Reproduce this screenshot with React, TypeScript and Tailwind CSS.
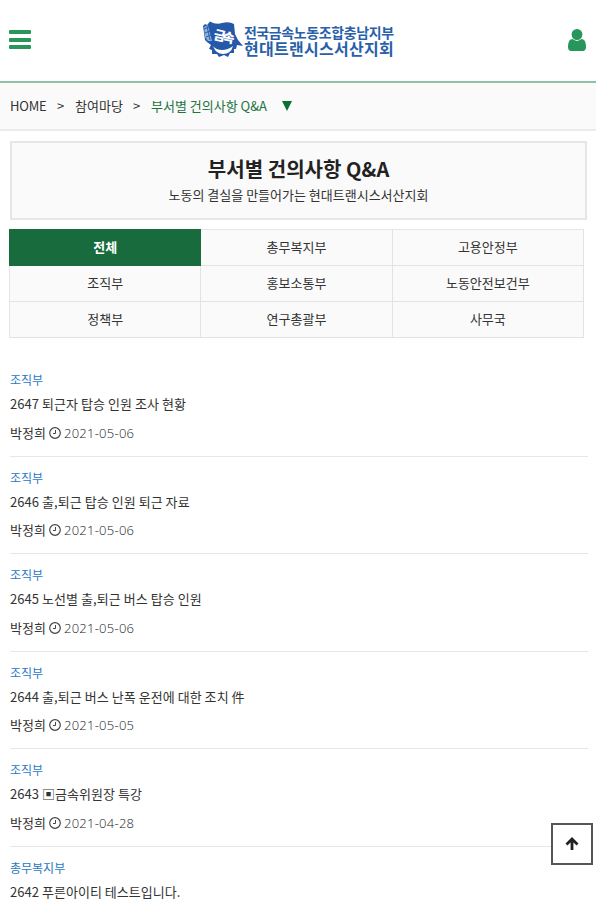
import React from "react";

const posts = [
  { dept: "조직부", title: "2647 퇴근자 탑승 인원 조사 현황", date: "2021-05-06" },
  { dept: "조직부", title: "2646 출,퇴근 탑승 인원 퇴근 자료", date: "2021-05-06" },
  { dept: "조직부", title: "2645 노선별 출,퇴근 버스 탑승 인원", date: "2021-05-06" },
  { dept: "조직부", title: "2644 출,퇴근 버스 난폭 운전에 대한 조치 件", date: "2021-05-05" },
  { dept: "조직부", title: "2643 ▣금속위원장 특강", date: "2021-04-28" },
];

const tabs = ["전체", "총무복지부", "고용안정부", "조직부", "홍보소통부", "노동안전보건부", "정책부", "연구총괄부", "사무국"];

function Flag() {
  return (
    <svg viewBox="0 0 42 38" className="h-[38px] w-[42px] shrink-0">
      <path d="M1 6 L3 4 L5 5 L8 1.500 Q14 5 20 3 Q27 1 32 4 L33 14 L36 20 L41 26 L35 25 L34 29 L32 29 L32 33 L28 33 L26 37 L22 35 L17 37 L15 34 L10 34 L10 30 L7 29 L9 25 L5 22 L3 20 L2 13 Z" fill="#2458a8" />
      <path d="M2 7 L6 5 L10 21 L6 21 L3 17 Z" fill="#8fafd8" />
      <path d="M2 9 L7 7 M3 13 L8 11 M4 17 L9 15 M5 6 L8 20" stroke="#2a5faa" strokeWidth="1" />
      <path d="M11 26 Q14 30 20 30 Q26 30 31 26 Q29 34 21 34 Q14 34 11 26Z" fill="#fff" />
      <text x="11" y="19" fontSize="13" fontWeight="900" fill="#fff" fontFamily="Noto Sans CJK KR, sans-serif" transform="rotate(12 11 19)" textLength="21">금속</text>
    </svg>
  );
}

function Clock() {
  return (
    <svg viewBox="0 0 12 12" className="h-3 w-3 shrink-0" fill="none" stroke="#444">
      <circle cx="6" cy="6" r="5.300" strokeWidth="1.200" />
      <path d="M6.500 3v3.500H4" strokeWidth="1" />
    </svg>
  );
}

export default function App() {
  return (
    <div className="relative h-[900px] w-full overflow-hidden bg-white font-['Noto_Sans_CJK_KR',sans-serif] text-[13px] text-[#333]">
      <header className="flex h-[83px] items-start justify-between border-b-2 border-[#8fc3a9] pr-[10px] pl-[9px]">
        <div className="mt-[30px] flex w-[22px] flex-col gap-[3.500px]">
          <i className="h-[4px] rounded-[1px] bg-[#26965b]" />
          <i className="h-[4px] rounded-[1px] bg-[#26965b]" />
          <i className="h-[4px] rounded-[1px] bg-[#26965b]" />
        </div>
        <div className="mt-5 mr-[3px] flex text-[#2a5faa]">
          <Flag />
          <div className="mt-[4px] whitespace-nowrap font-bold">
            <div className="text-[14px] leading-[16px] tracking-[-0.400px]">전국금속노동조합충남지부</div>
            <div className="text-[16px] leading-[16px] tracking-[0.300px]">현대트랜시스서산지회</div>
          </div>
        </div>
        <svg viewBox="0 128 1280 1536" className="mt-[29px] h-[22px] w-[18px]" preserveAspectRatio="none" fill="#26965b">
          <path d="M1280 1399q0 109-62.500 187t-150.500 78h-854q-88 0-150.500-78t-62.500-187q0-85 8.500-160.500t31.500-152 58.500-131 94-89 134.500-34.500q131 128 313 128t313-128q76 0 134.500 34.500t94 89 58.500 131 31.500 152 8.500 160.500zm-256-887q0 159-112.500 271.500t-271.500 112.500-271.500-112.500-112.500-271.500 112.500-271.500 271.500-112.500 271.500 112.500 112.500 271.500z" />
        </svg>
      </header>

      <nav className="flex h-[48px] items-center whitespace-nowrap border-b-2 border-[#ebebeb] bg-[#fafafa] pl-[10px]">
        <span className="w-[47px] tracking-[-0.200px]">HOME</span>
        <span className="w-[18px]">&gt;</span>
        <span className="w-[58px]">참여마당</span>
        <span className="w-[18px]">&gt;</span>
        <span className="w-[131px] text-[#22733f]">부서별 건의사항 Q&amp;A</span>
        <svg viewBox="0 0 10 10" className="h-[10px] w-[10px]" fill="#0b702f">
          <path d="M0 0h10L5 10z" />
        </svg>
      </nav>

      <section className="mt-[10px] mr-[9px] ml-[10px] flex h-[79px] flex-col items-center border-2 border-[#e6e6e6] bg-[#fafafa] pt-[13px]">
        <h1 className="text-[20px] leading-[26px] font-bold tracking-[0.050px] text-[#222]">부서별 건의사항 Q&amp;A</h1>
        <p className="text-[13px] leading-[26px]">노동의 결실을 만들어가는 현대트랜시스서산지회</p>
      </section>

      <div className="mt-[9px] ml-[9px] grid w-[575px] grid-cols-3 border-t border-l border-[#e6e6e6] bg-[#fafafa] text-center">
        {tabs.map((tab, i) => (
          <div
            key={tab}
            className={
              i === 0
                ? "-mt-px -ml-px h-[37px] bg-[#176b3c] pt-px leading-[34px] font-bold text-white"
                : "h-9 border-r border-b border-[#e3e3e3] leading-[34px]"
            }
          >
            {tab}
          </div>
        ))}
      </div>

      <ul className="mt-[21px] mr-[8px] ml-[10px]">
        {posts.map((post) => (
          <li key={post.title} className="h-[97.600px] border-b border-[#e6e6e6] pt-[11px] whitespace-nowrap">
            <div className="text-[12px] leading-5 text-[#2878c4]">{post.dept}</div>
            <div className="mt-[2px] leading-6 tracking-[0.050px]">{post.title}</div>
            <div className="mt-[4.500px] flex items-center leading-6">
              <span className="w-[39px]">박정희</span>
              <Clock />
              <span className="ml-[3px] font-['Open_Sans',sans-serif] font-light tracking-[0.250px] text-[#222]">{post.date}</span>
            </div>
          </li>
        ))}
        <li className="pt-[11px] whitespace-nowrap">
          <div className="text-[12px] leading-5 text-[#2878c4]">총무복지부</div>
          <div className="mt-[2px] leading-[20px] tracking-[0.030px]">
            <span className="relative top-[2px]">2642 푸른아이티 테스트입니다.</span>
          </div>
        </li>
      </ul>

      <button aria-label="맨 위로" className="absolute top-[823px] left-[551px] flex h-[42px] w-[42px] items-center justify-center border-2 border-[#555] bg-white">
        <svg viewBox="0 0 14 14" className="h-[14px] w-[14px]" fill="none" stroke="#222" strokeWidth="2.800">
          <path d="M7 13V2M1.500 7.500L7 2l5.500 5.500" />
        </svg>
      </button>
    </div>
  );
}
